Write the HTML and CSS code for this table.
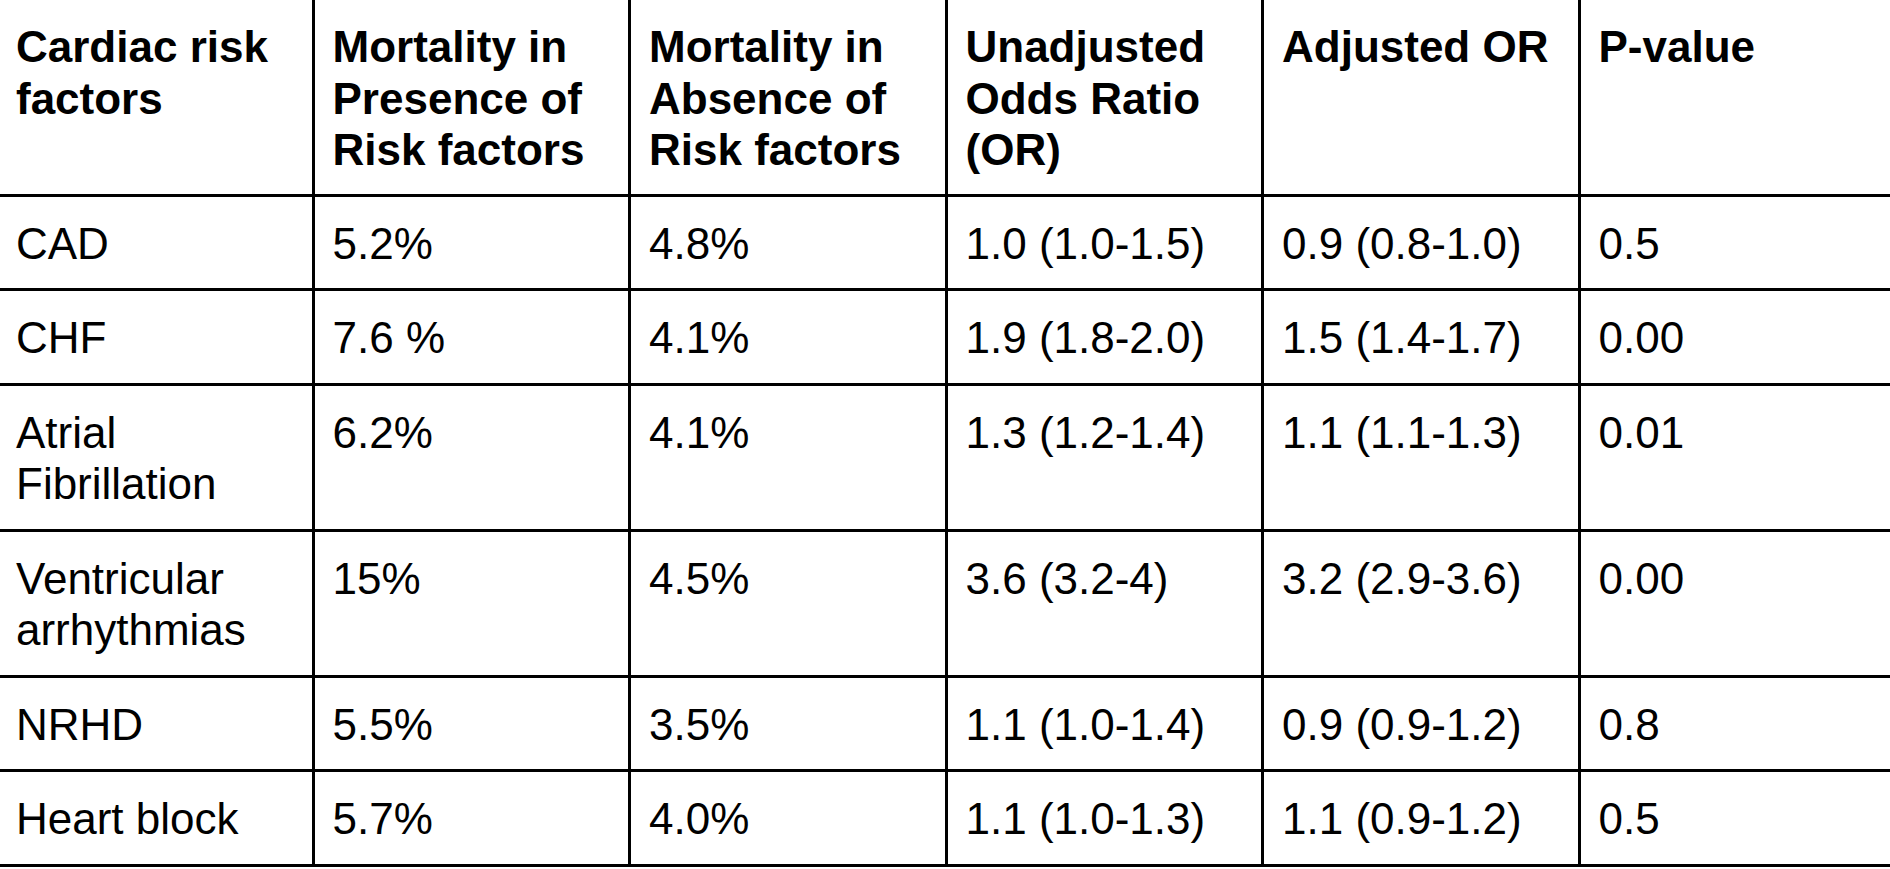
FILE: index.html
```html
<!DOCTYPE html>
<html>
<head>
<meta charset="utf-8">
<link rel="stylesheet" href="styles.css">
</head>
<body>
<table class="risk-table">
  <colgroup>
    <col class="col"><col class="col"><col class="col"><col class="col"><col class="col"><col class="col">
  </colgroup>
  <thead>
    <tr>
      <th>Cardiac risk factors</th>
      <th>Mortality in Presence of Risk factors</th>
      <th>Mortality in Absence of Risk factors</th>
      <th>Unadjusted Odds Ratio (OR)</th>
      <th>Adjusted OR</th>
      <th>P-value</th>
    </tr>
  </thead>
  <tbody>
    <tr><td>CAD</td><td>5.2%</td><td>4.8%</td><td>1.0 (1.0-1.5)</td><td>0.9 (0.8-1.0)</td><td>0.5</td></tr>
    <tr><td>CHF</td><td>7.6 %</td><td>4.1%</td><td>1.9 (1.8-2.0)</td><td>1.5 (1.4-1.7)</td><td>0.00</td></tr>
    <tr><td>Atrial Fibrillation</td><td>6.2%</td><td>4.1%</td><td>1.3 (1.2-1.4)</td><td>1.1 (1.1-1.3)</td><td>0.01</td></tr>
    <tr><td>Ventricular arrhythmias</td><td>15%</td><td>4.5%</td><td>3.6 (3.2-4)</td><td>3.2 (2.9-3.6)</td><td>0.00</td></tr>
    <tr><td>NRHD</td><td>5.5%</td><td>3.5%</td><td>1.1 (1.0-1.4)</td><td>0.9 (0.9-1.2)</td><td>0.8</td></tr>
    <tr><td>Heart block</td><td>5.7%</td><td>4.0%</td><td>1.1 (1.0-1.3)</td><td>1.1 (0.9-1.2)</td><td>0.5</td></tr>
  </tbody>
</table>
</body>
</html>
```
FILE: styles.css
```css
html, body {
  margin: 0;
  padding: 0;
  background: #ffffff;
  overflow: hidden;
}

.risk-table {
  border-collapse: collapse;
  table-layout: fixed;
  width: 1899px;
  margin-left: -5px;
  margin-top: -3px;
  font-family: "Liberation Sans", Arial, sans-serif;
  font-size: 44px;
  line-height: 51.5px;
  color: #000000;
}

.risk-table .col {
  width: 316.5px;
}

.risk-table th,
.risk-table td {
  border: 3px solid #000000;
  padding: 21px 18px 19px 18px;
  text-align: left;
  vertical-align: top;
}

.risk-table th {
  font-weight: bold;
  padding-bottom: 18px;
}

.risk-table td {
  font-weight: normal;
}
```
